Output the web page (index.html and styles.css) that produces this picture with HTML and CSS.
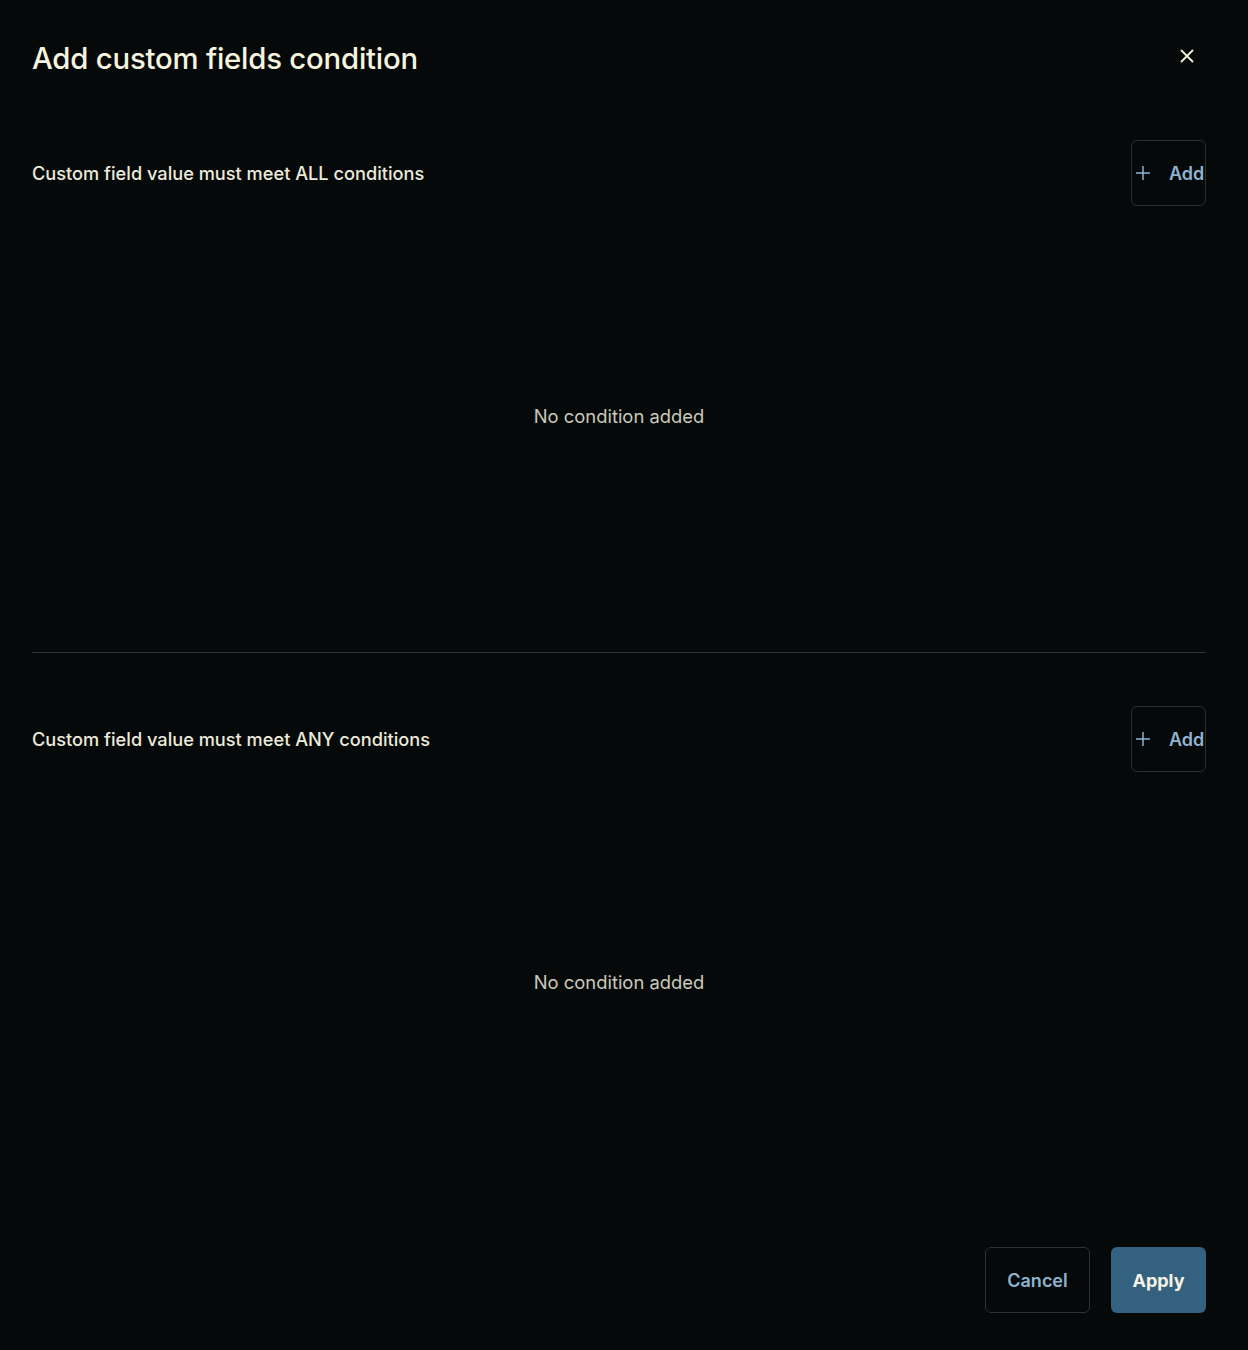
FILE: index.html
```html
<!DOCTYPE html>
<html lang="en">
<head>
<meta charset="utf-8">
<title>Add custom fields condition</title>
<link rel="stylesheet" href="styles.css">
</head>
<body>
<div class="modal">
  <header class="modal-header">
    <h1 class="modal-title">Add custom fields condition</h1>
    <button class="close-btn" aria-label="Close">
      <svg width="16" height="16" viewBox="0 0 16 16"><path d="M2.5 2.5 L13.5 13.5 M13.5 2.5 L2.5 13.5" stroke="#f4f1dc" stroke-width="1.8" stroke-linecap="round"/></svg>
    </button>
  </header>

  <section class="cond-section">
    <div class="cond-head">
      <span class="cond-label">Custom field value must meet ALL conditions</span>
      <button class="add-btn"><svg width="16" height="16" viewBox="0 0 16 16"><path d="M8 1 V15 M1 8 H15" stroke="#8fb3cf" stroke-width="1.5"/></svg><span class="add-text">Add</span></button>
    </div>
    <div class="empty">No condition added</div>
  </section>

  <hr class="divider">

  <section class="cond-section second">
    <div class="cond-head">
      <span class="cond-label">Custom field value must meet ANY conditions</span>
      <button class="add-btn"><svg width="16" height="16" viewBox="0 0 16 16"><path d="M8 1 V15 M1 8 H15" stroke="#8fb3cf" stroke-width="1.5"/></svg><span class="add-text">Add</span></button>
    </div>
    <div class="empty">No condition added</div>
  </section>

  <footer class="modal-footer">
    <button class="btn btn-cancel">Cancel</button>
    <button class="btn btn-apply">Apply</button>
  </footer>
</div>
</body>
</html>
```

FILE: styles.css
```css
* { box-sizing: border-box; }
html, body {
  margin: 0;
  padding: 0;
  background: #060909;
}
body {
  font-family: Inter, "Noto Sans", sans-serif;
  color: #f0eedb;
}
.modal {
  width: 1248px;
  height: 1350px;
  padding: 33px 42px 0 32px;
  display: flex;
  flex-direction: column;
}
.modal-header {
  display: flex;
  align-items: center;
  justify-content: space-between;
  height: 50px;
}
.modal-title {
  margin: 0;
  font-size: 29.3px;
  font-weight: 500;
  color: #f6f3de;
  letter-spacing: -0.2px;
}
.close-btn {
  background: none;
  border: none;
  padding: 0;
  width: 24px;
  height: 24px;
  display: flex;
  align-items: center;
  justify-content: center;
  margin-right: 7px;
  margin-top: -4px;
}
.cond-section {
  margin-top: 57px;
  display: flex;
  flex-direction: column;
}
.cond-section.second {
  margin-top: 53px;
}
.cond-head {
  display: flex;
  align-items: center;
  justify-content: space-between;
  height: 66px;
}
.cond-label {
  font-size: 18.2px;
  font-weight: 500;
  color: #eceadb;
}
.add-btn {
  width: 75px;
  height: 66px;
  border: 1px solid #2c2f30;
  border-radius: 6px;
  background: transparent;
  display: flex;
  align-items: center;
  gap: 17px;
  padding: 0 0 0 3px;
  overflow: hidden;
  font-family: inherit;
}
.add-btn svg { flex: none; }
.add-text {
  font-size: 18px;
  font-weight: 600;
  color: #8fb3cf;
  white-space: nowrap;
  margin-left: 1px;
}
.empty {
  height: 419px;
  display: flex;
  align-items: center;
  justify-content: center;
  font-size: 18.4px;
  color: #cbc9bb;
}
.divider {
  border: none;
  border-top: 1px solid #313435;
  margin: 27px 0 0 0;
  height: 0;
}
.modal-footer {
  margin-top: 56px;
  display: flex;
  justify-content: flex-end;
  gap: 21px;
}
.btn {
  height: 66px;
  border-radius: 6px;
  font-family: inherit;
  font-size: 18px;
  font-weight: 600;
}
.btn-cancel {
  width: 105px;
  background: transparent;
  border: 1px solid #2e3132;
  color: #8fb3cf;
}
.btn-apply {
  width: 95px;
  background: #346180;
  border: none;
  color: #f6f3e4;
  font-weight: 700;
}
```
